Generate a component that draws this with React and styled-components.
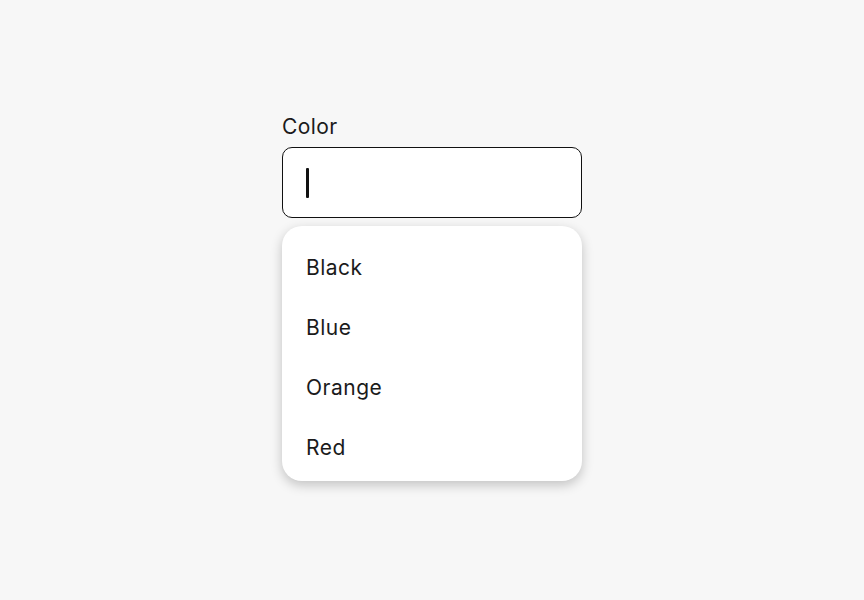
import React from "react";
import styled, { createGlobalStyle } from "styled-components";

const GlobalStyle = createGlobalStyle`
  html, body {
    margin: 0;
    padding: 0;
    background: #f7f7f7;
  }
  body {
    font-family: Inter, "Noto Sans", sans-serif;
    color: #1b1b1b;
  }
`;

const Page = styled.div`
  width: 864px;
  height: 600px;
  display: flex;
  justify-content: center;
  padding-top: 115px;
  box-sizing: border-box;
`;

const Field = styled.div`
  width: 300px;
  display: flex;
  flex-direction: column;
`;

const Label = styled.label`
  font-size: 21px;
  line-height: 24px;
  letter-spacing: 0.4px;
  margin-bottom: 8px;
  color: #1b1b1b;
`;

const InputBox = styled.div`
  height: 71px;
  box-sizing: border-box;
  border: 1.25px solid #111;
  border-radius: 10px;
  background: #fff;
  display: flex;
  align-items: center;
  padding-left: 23px;
`;

const Caret = styled.span`
  display: block;
  width: 2.5px;
  height: 30px;
  border-radius: 1px;
  background: #111;
`;

const Listbox = styled.ul`
  list-style: none;
  margin: 8px 0 0;
  padding: 12px 0 3px;
  background: #fff;
  border-radius: 20px;
  box-shadow: 0 4px 12px rgba(0, 0, 0, 0.22);
`;

const Option = styled.li`
  height: 60px;
  display: flex;
  align-items: center;
  padding-left: 24px;
  font-size: 21px;
  line-height: 24px;
  letter-spacing: 0.5px;
  color: #1b1b1b;
`;

const colors = ["Black", "Blue", "Orange", "Red"];

export default function App() {
  return (
    <>
      <GlobalStyle />
      <Page>
        <Field>
          <Label>Color</Label>
          <InputBox>
            <Caret />
          </InputBox>
          <Listbox>
            {colors.map((c) => (
              <Option key={c}>{c}</Option>
            ))}
          </Listbox>
        </Field>
      </Page>
    </>
  );
}
